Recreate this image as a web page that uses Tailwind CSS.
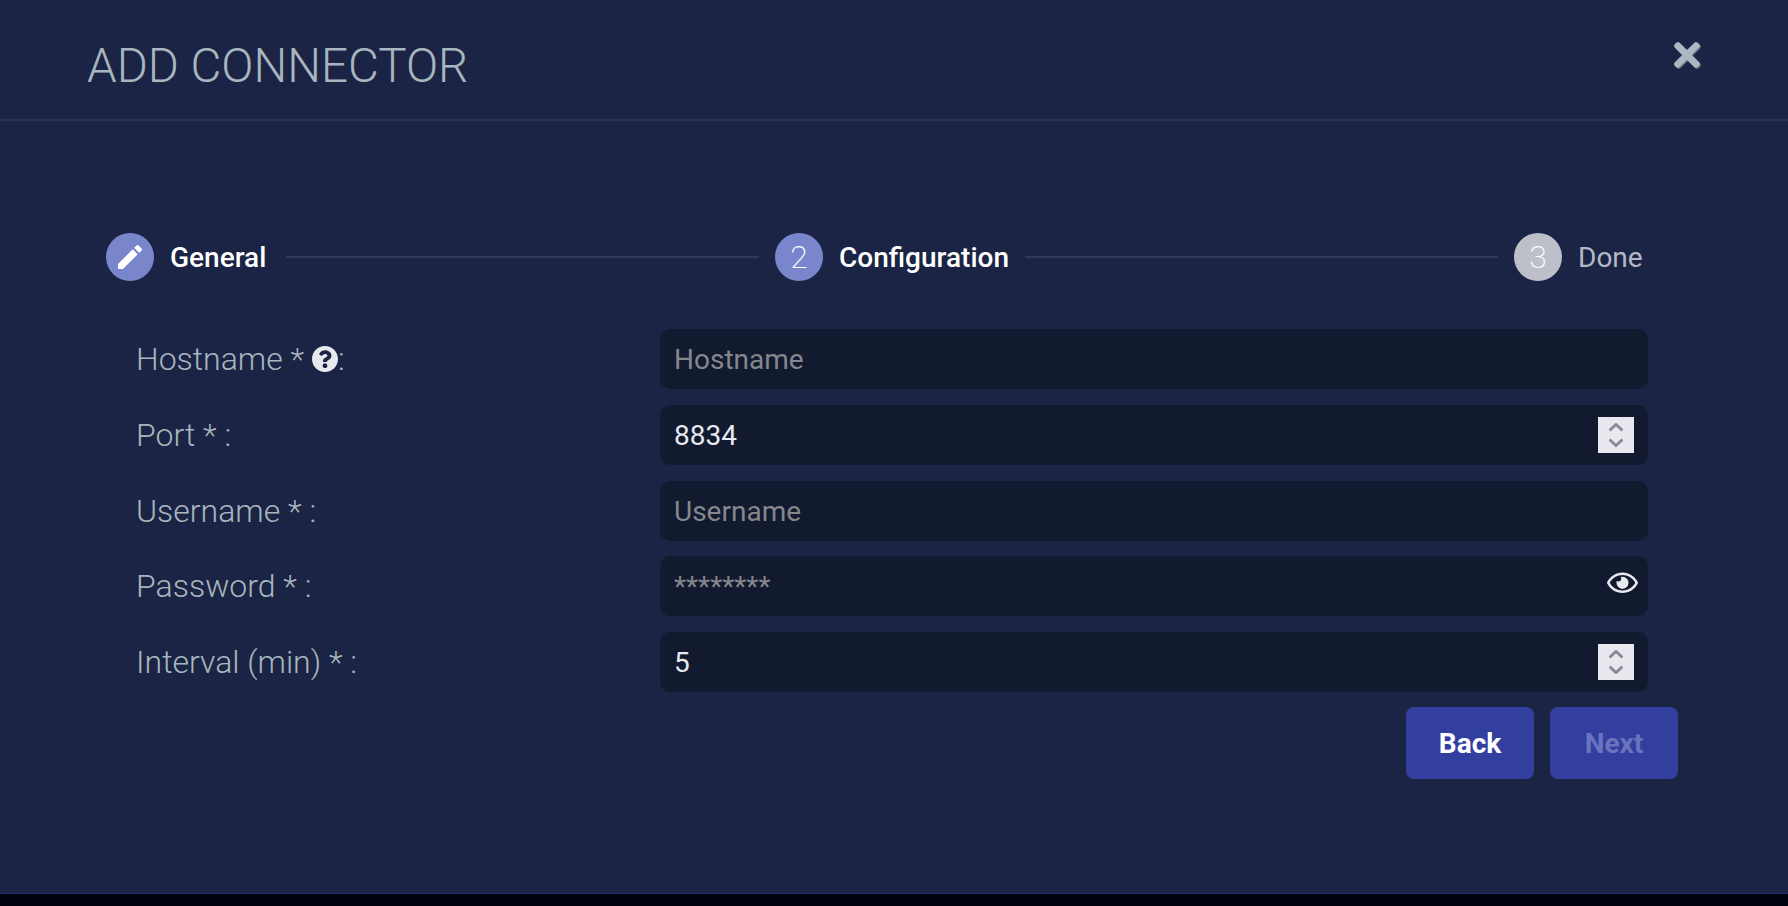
<!DOCTYPE html>
<html>
<head>
<meta charset="utf-8">
<script src="https://cdn.jsdelivr.net/npm/@tailwindcss/browser@4"></script>
</head>
<body class="m-0 bg-[#00020e] font-['Roboto',sans-serif]">
<div class="w-[1788px] h-[906px] overflow-hidden">
  <div class="h-[894px] bg-[#1b2444] border-b border-[#1f2a78] flex flex-col">
    <header class="relative h-[121px] shrink-0 border-b-2 border-[#2a3450] pl-[87px] pt-[37px]">
      <h1 class="text-[47.5px] leading-[58px] font-light text-[#a7b6bf]">ADD CONNECTOR</h1>
      <svg class="absolute left-[1674px] top-[42px] w-[26px] h-[26px] drop-shadow-[1.5px_1.5px_0_#5c6278]" viewBox="0 80 352 352" fill="#a9b8c1"><path d="M242.72 256l100.07-100.07c12.28-12.28 12.28-32.19 0-44.48l-22.24-22.24c-12.28-12.28-32.19-12.28-44.48 0L176 189.28 75.93 89.21c-12.28-12.28-32.19-12.28-44.48 0L9.21 111.45c-12.28 12.28-12.28 32.19 0 44.48L109.28 256 9.21 356.07c-12.28 12.28-12.28 32.19 0 44.48l22.24 22.24c12.28 12.28 32.2 12.28 44.48 0L176 322.72l100.07 100.07c12.28 12.28 32.2 12.28 44.48 0l22.24-22.24c12.28-12.28 12.28-32.19 0-44.48L242.72 256z"/></svg>
    </header>

    <div class="flex items-center h-[48px] mt-[112px] pl-[106px] w-[1642px] box-content">
      <div class="w-[48px] h-[48px] rounded-full bg-[#7986cb] flex items-center justify-center shrink-0">
        <svg class="w-[32px] h-[32px]" viewBox="0 0 24 24" fill="#fff"><path d="M3 17.25V21h3.75L17.81 9.94l-3.75-3.75L3 17.25zM20.71 7.04c.39-.39.39-1.02 0-1.41l-2.34-2.34c-.39-.39-1.02-.39-1.41 0l-1.83 1.83 3.75 3.75 1.83-1.83z"/></svg>
      </div>
      <span class="ml-[16px] pt-[2px] text-[28px] font-medium text-white w-[94px] whitespace-nowrap">General</span>
      <div class="ml-[22px] w-[473px] h-[2px] bg-[#2f3a58]"></div>
      <div class="ml-[16px] w-[48px] h-[48px] rounded-full bg-[#7986cb] flex items-center justify-center shrink-0 text-[32px] font-extralight text-white">2</div>
      <span class="ml-[16px] pt-[2px] text-[28px] font-medium text-white w-[169px] whitespace-nowrap">Configuration</span>
      <div class="ml-[17px] w-[473px] h-[2px] bg-[#2f3a58]"></div>
      <div class="ml-[16px] w-[48px] h-[48px] rounded-full bg-[#bdbfc9] flex items-center justify-center shrink-0 text-[32px] font-extralight text-white">3</div>
      <span class="ml-[16px] pt-[2px] text-[28px] text-[#b4b8c6] whitespace-nowrap">Done</span>
    </div>

    <form class="mt-[48px] flex flex-col gap-[15.75px] pl-[136px] w-[1648px]">
      <div class="flex items-center h-[60px]">
        <label class="w-[524px] text-[32px] font-light text-[#a7b6bf] flex items-center whitespace-pre">Hostname * <svg class="w-[26px] h-[26px]" viewBox="8 8 496 496" fill="#e8e9ef"><path d="M504 256c0 136.997-111.043 248-248 248S8 392.997 8 256C8 119.083 119.043 8 256 8s248 111.083 248 248zM262.655 90c-54.497 0-89.255 22.957-116.549 63.758-3.536 5.286-2.353 12.415 2.715 16.258l34.699 26.31c5.205 3.947 12.621 3.008 16.665-2.122 17.864-22.658 30.113-35.797 57.303-35.797 20.429 0 45.698 13.148 45.698 32.958 0 14.976-12.363 22.667-32.534 33.976C247.128 238.528 216 254.941 216 296v4c0 6.627 5.373 12 12 12h56c6.627 0 12-5.373 12-12v-1.333c0-28.462 83.186-29.647 83.186-106.667 0-58.002-60.165-102-116.531-102zM256 338c-25.365 0-46 20.635-46 46 0 25.364 20.635 46 46 46s46-20.636 46-46c0-25.365-20.635-46-46-46z"/></svg>:</label>
        <input class="flex-1 min-w-0 h-[60px] rounded-[10px] bg-[#121a30] px-[14px] text-[28px] text-[#e8e9ef] placeholder:text-[#85878c] outline-none" placeholder="Hostname">
      </div>
      <div class="flex items-center h-[60px]">
        <label class="w-[524px] text-[32px] font-light text-[#a7b6bf]">Port * :</label>
        <div class="relative flex-1 min-w-0">
          <input class="w-full h-[60px] rounded-[10px] bg-[#121a30] px-[14px] pt-[1px] text-[28px] text-[#e8e9ef] outline-none" value="8834">
          <div class="absolute right-[14px] top-[12px] w-[36px] h-[36px] bg-[#e8e8ee] flex items-center justify-center">
            <svg class="w-[14px] h-[24px]" viewBox="0 0 14 24" fill="none" stroke="#8a8a9a" stroke-width="3"><path d="M0.500 7.500L7 1.500l6.500 6M0.500 16.500L7 22.500l6.500-6"/></svg>
          </div>
        </div>
      </div>
      <div class="flex items-center h-[60px]">
        <label class="w-[524px] text-[32px] font-light text-[#a7b6bf]">Username * :</label>
        <input class="flex-1 min-w-0 h-[60px] rounded-[10px] bg-[#121a30] px-[14px] pt-[2px] text-[28px] text-[#e8e9ef] placeholder:text-[#85878c] outline-none" placeholder="Username">
      </div>
      <div class="flex items-center h-[60px]">
        <label class="w-[524px] text-[32px] font-light text-[#a7b6bf]">Password * :</label>
        <div class="relative flex-1 min-w-0">
          <input class="w-full h-[60px] rounded-[10px] bg-[#121a30] px-[14px] text-[28px] text-[#e8e9ef] placeholder:text-[#85878c] outline-none" placeholder="********">
          <svg class="absolute right-[10px] top-[13px] w-[31px] h-[27.500px]" viewBox="0 0 576 512" fill="#e8e9ef"><path d="M288 144a110.94 110.94 0 0 0-31.24 5 55.4 55.4 0 0 1 7.24 27 56 56 0 0 1-56 56 55.4 55.4 0 0 1-27-7.24A111.71 111.71 0 1 0 288 144zm284.52 97.4C518.29 135.59 410.93 64 288 64S57.68 135.64 3.48 241.41a32.35 32.35 0 0 0 0 29.19C57.71 376.41 165.07 448 288 448s230.32-71.64 284.52-177.41a32.35 32.35 0 0 0 0-29.19zM288 400c-98.65 0-189.09-55-237.93-144C98.91 167 189.34 112 288 112s189.09 55 237.93 144C477.1 345 386.66 400 288 400z"/></svg>
        </div>
      </div>
      <div class="flex items-center h-[60px]">
        <label class="w-[524px] text-[32px] font-light text-[#a7b6bf]">Interval (min) * :</label>
        <div class="relative flex-1 min-w-0">
          <input class="w-full h-[60px] rounded-[10px] bg-[#121a30] px-[14px] text-[28px] text-[#e8e9ef] outline-none" value="5">
          <div class="absolute right-[14px] top-[12px] w-[36px] h-[36px] bg-[#e8e8ee] flex items-center justify-center">
            <svg class="w-[14px] h-[24px]" viewBox="0 0 14 24" fill="none" stroke="#8a8a9a" stroke-width="3"><path d="M0.500 7.500L7 1.500l6.500 6M0.500 16.500L7 22.500l6.500-6"/></svg>
          </div>
        </div>
      </div>
    </form>

    <div class="flex justify-end gap-[16px] w-[1678px] mt-[15px]">
      <button class="w-[128px] h-[72px] rounded-[8px] bg-[#323f9f] pt-[2px] text-[28px] font-bold text-white">Back</button>
      <button class="w-[128px] h-[72px] rounded-[8px] bg-[#323f9f] pt-[2px] text-[28px] font-bold text-[#6a74bd]">Next</button>
    </div>
  </div>
</div>
</body>
</html>
